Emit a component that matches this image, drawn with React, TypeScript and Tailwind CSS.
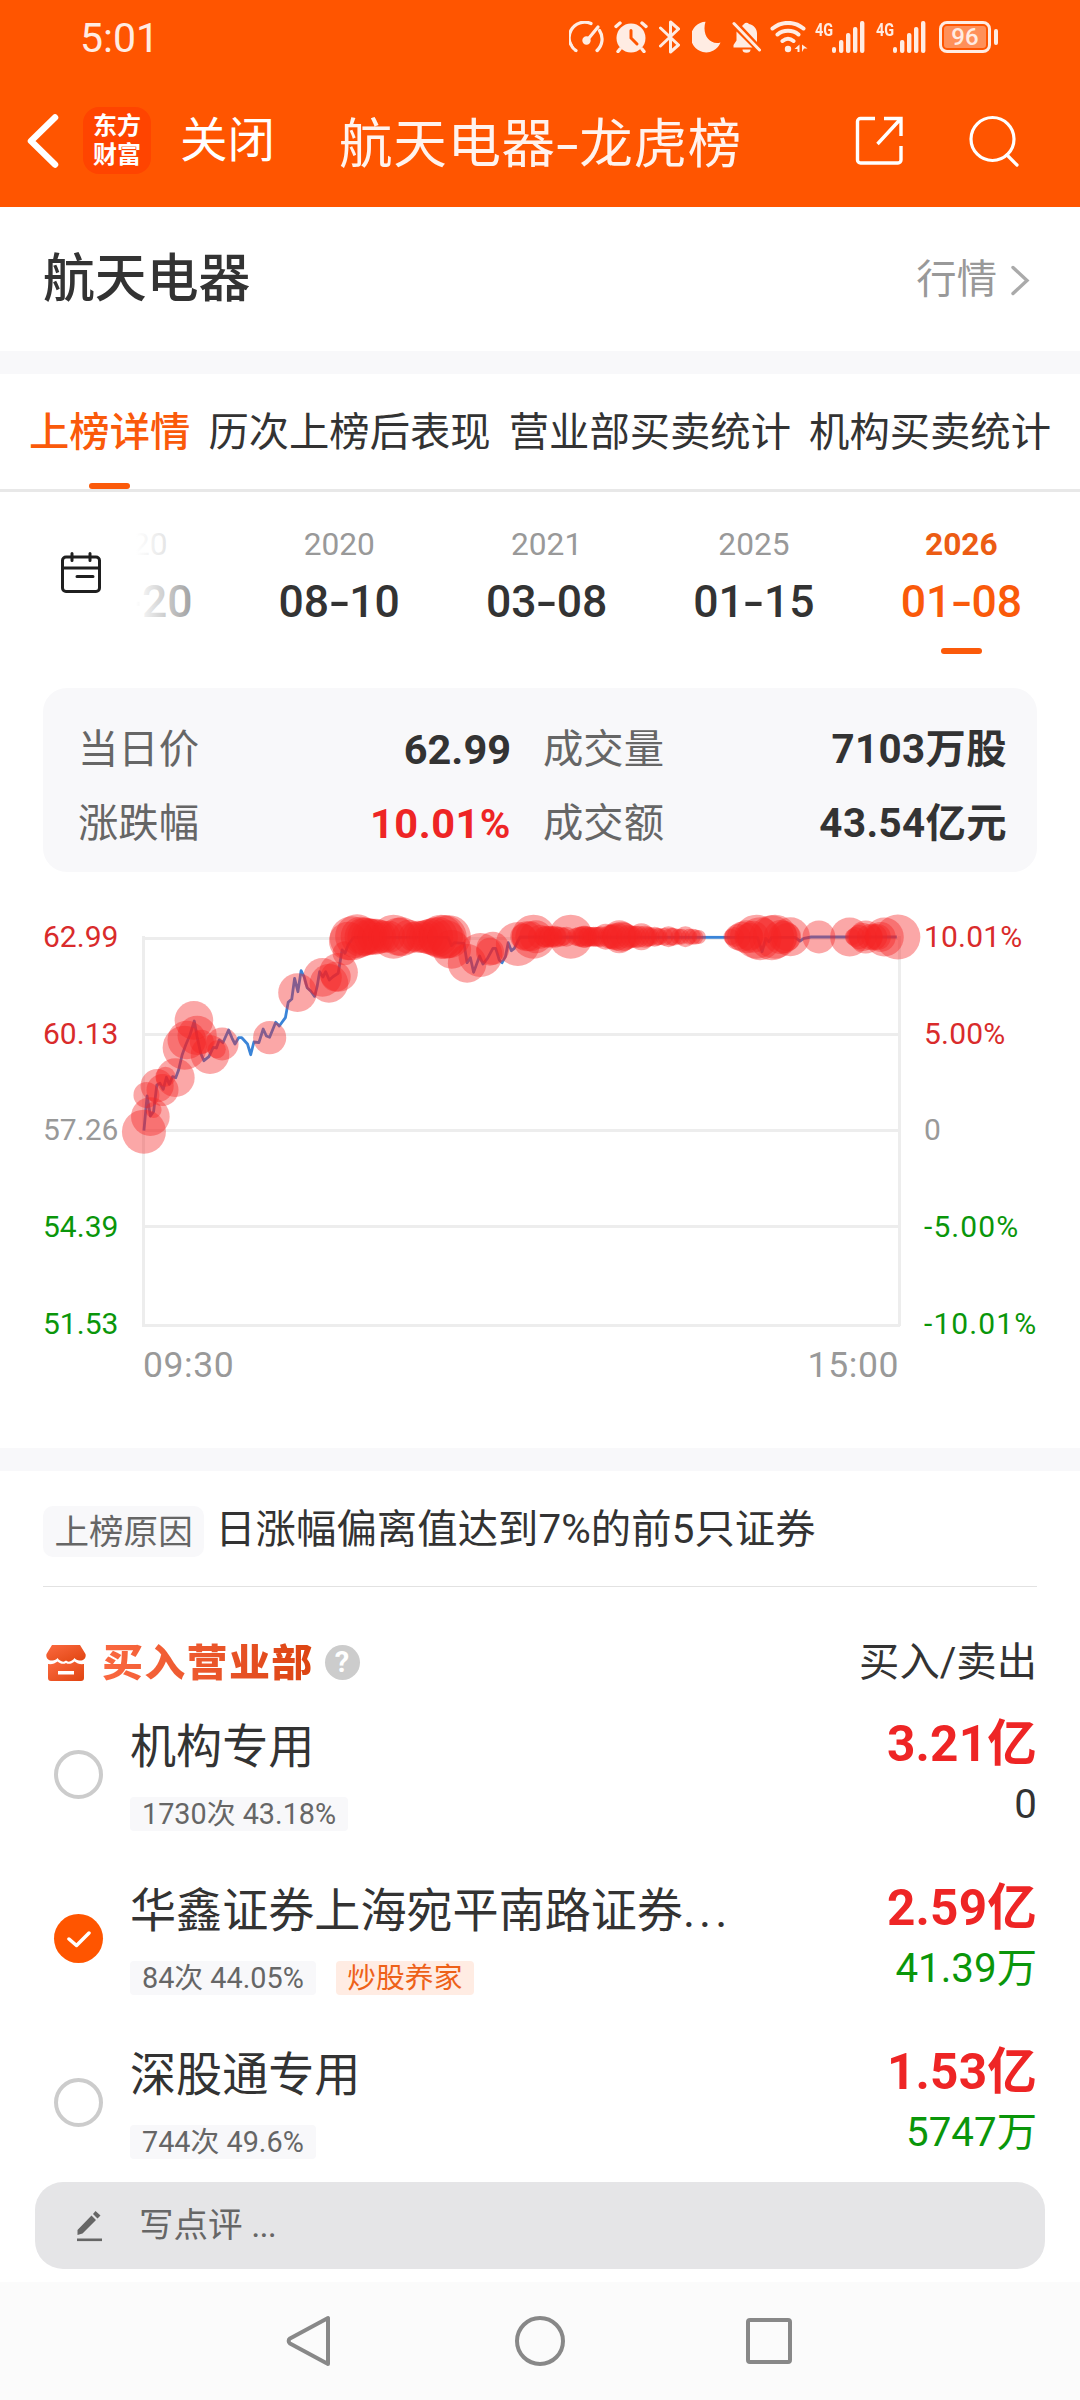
import { useState } from "react";
import clsx from "clsx";

type TradeDate = {
  year: string;
  month: string;
  day: string;
};

type Branch = {
  name: string;
  truncated?: boolean;
  stat: string;
  label?: string;
  buy: string;
  sell: string;
};

const tabs = ["上榜详情", "历次上榜后表现", "营业部买卖统计", "机构买卖统计"];

const tradeDates: TradeDate[] = [
  { year: "2020", month: "05", day: "20" },
  { year: "2020", month: "08", day: "10" },
  { year: "2021", month: "03", day: "08" },
  { year: "2025", month: "01", day: "15" },
  { year: "2026", month: "01", day: "08" },
];

const branches: Branch[] = [
  { name: "机构专用", stat: "1730次 43.18%", buy: "3.21亿", sell: "0" },
  {
    name: "华鑫证券上海宛平南路证券",
    truncated: true,
    stat: "84次 44.05%",
    label: "炒股养家",
    buy: "2.59亿",
    sell: "41.39万",
  },
  { name: "深股通专用", stat: "744次 49.6%", buy: "1.53亿", sell: "5747万" },
];

// Intraday price samples
const pricePoints: [number, number][] = [
  [403, 722], [412, 618], [421, 678], [430, 665], [439, 585], [448, 580], [457, 598], [466, 562],
  [474, 583], [483, 560], [492, 563], [500, 540], [510, 495], [520, 465], [532, 435], [544, 393],
  [552, 440], [562, 490], [571, 512], [585, 500], [597, 472], [606, 474], [614, 450], [624, 458],
  [640, 420], [650, 445], [658, 462], [668, 443], [677, 443], [693, 462], [702, 494], [711, 456],
  [725, 458], [737, 417], [746, 438], [755, 442], [772, 397], [782, 408], [799, 383], [807, 337],
  [817, 327], [825, 265], [834, 305], [843, 242], [852, 262], [860, 293], [870, 303], [881, 319],
  [888, 290], [895, 245], [904, 261], [912, 245], [922, 270], [932, 260], [947, 250], [958, 180],
  [966, 190], [975, 165], [990, 142], [1255, 142], [1264, 167], [1272, 158], [1299, 160], [1308, 218],
  [1317, 203], [1326, 247], [1343, 198], [1352, 222], [1365, 205], [1380, 175], [1388, 175], [1398, 210],
  [1406, 218], [1415, 200], [1423, 158], [1432, 182], [1440, 175], [1456, 141], [2121, 142], [2134, 185],
  [2144, 145], [2153, 155], [2161, 142], [2226, 142], [2240, 153], [2251, 145], [2271, 141], [2511, 141],
];

// Big orders: x, y, radius
const bubbles: [number, number, number][] = [
  [403, 725, 22], [421, 680, 19.3], [410, 615, 13], [440, 587, 16.6], [455, 600, 16], [463, 560, 10],
  [430, 660, 8], [491, 563, 19.3], [517, 473, 22], [543, 391, 19.3], [523, 450, 19.3], [552, 436, 19.6],
  [588, 494, 19.3], [622, 462, 16.4], [607, 478, 9], [565, 455, 12],
  [755, 443, 16.6], [833, 308, 19.3], [903, 262, 19.3], [921, 280, 19.3], [948, 247, 19.3], [940, 260, 15],
  [965, 190, 12], [975, 153, 19.3], [985, 145, 22], [1000, 139, 22], [1010, 140, 20], [1018, 140, 19],
  [1026, 140, 19], [1034, 140, 18], [1042, 140, 18], [1052, 140, 18], [1062, 140, 17], [1076, 140, 16],
  [1090, 140, 16], [1102, 140, 22], [1115, 140, 19], [1125, 140, 19.5], [1145, 140, 17], [1158, 140, 15],
  [1170, 140, 16], [1182, 140, 16], [1194, 140, 17], [1205, 140, 18], [1216, 140, 19], [1226, 140, 20],
  [1235, 140, 22], [1245, 141, 22], [1258, 140, 21.5], [1250, 148, 19], [1265, 178, 19.3], [1308, 220, 19.3],
  [1345, 195, 22], [1380, 175, 16.5], [1372, 185, 14], [1450, 162, 22], [1494, 140, 22],
  [1465, 140, 13], [1475, 139, 15], [1485, 139, 15], [1501, 140, 16.5], [1512, 140, 12], [1524, 140, 10.5],
  [1536, 140, 10.5], [1548, 140, 10], [1560, 140, 10], [1586, 140, 10], [1598, 140, 22],
  [1530, 140, 11], [1542, 140, 11], [1554, 140, 11], [1570, 140, 10], [1578, 140, 9],
  [1612, 140, 9], [1622, 140, 10], [1634, 140, 11], [1644, 140, 10], [1656, 140, 9.5], [1668, 140, 10],
  [1628, 140, 10], [1639, 140, 11], [1650, 140, 10], [1662, 140, 10], [1675, 140, 10],
  [1682, 140, 10.5], [1696, 140, 13], [1708, 140, 12], [1720, 140, 13], [1734, 140, 16.5], [1748, 140, 14],
  [1714, 140, 12], [1727, 140, 14], [1741, 140, 15], [1768, 140, 11],
  [1760, 140, 12], [1778, 140, 11], [1796, 140, 13.5], [1806, 140, 11], [1820, 140, 9.5], [1833, 140, 10],
  [1787, 140, 11], [1813, 140, 10], [1840, 140, 9],
  [1846, 140, 8.5], [1860, 140, 9], [1872, 140, 10.5], [1886, 140, 9], [1900, 140, 8], [1919, 140, 10.5],
  [1879, 140, 9], [1908, 140, 8],
  [1930, 140, 8], [1940, 140, 8], [1948, 141, 7.5], [1957, 141, 7],
  [2048, 141, 8], [2056, 141, 10], [2066, 141, 13], [2078, 140, 15], [2090, 140, 16.5], [2098, 140, 14],
  [2108, 140, 16], [2118, 140, 22], [2128, 146, 21.5], [2161, 143, 22.5], [2170, 140, 22],
  [2186, 141, 17], [2196, 141, 16], [2204, 141, 14], [2213, 140, 19.5], [2293, 141, 16.4], [2379, 141, 19.5],
  [2388, 141, 8], [2396, 141, 10], [2406, 141, 12], [2416, 141, 14], [2424, 141, 16.5], [2436, 141, 13],
  [2448, 141, 13], [2458, 141, 13], [2466, 141, 15], [2476, 141, 19.5], [2514, 141, 22.5],
];

const scaleX = (x: number) => x / 2.8;
const scaleY = (y: number) => y / 3;

const axisRows = [
  { price: "62.99", percent: "10.01%", y: 46, line: 48.5, color: "#d92b2b" },
  { price: "60.13", percent: "5.00%", y: 143, line: 144.5, color: "#d92b2b" },
  { price: "57.26", percent: "0", y: 239, line: 240.5, color: "#999999" },
  { price: "54.39", percent: "-5.00%", y: 336, line: 336.5, color: "#0a960a" },
  { price: "51.53", percent: "-10.01%", y: 433, line: 435.5, color: "#0a960a" },
];

function Signal() {
  return (
    <div className="flex h-8 w-[50px] items-start">
      <span className="-mt-px w-[17px] origin-left scale-x-[0.76] text-[19px] leading-none font-bold">4G</span>
      <svg className="h-8 w-[33px]" viewBox="0 0 33 32" fill="currentColor">
        <rect x="0" y="26" width="4" height="6" rx="2" />
        <rect x="7" y="19" width="4.4" height="13" rx="2" />
        <rect x="14" y="12" width="4.4" height="20" rx="2" />
        <rect x="21" y="6" width="4.4" height="26" rx="2" />
        <rect x="28" y="0" width="4.4" height="32" rx="2" />
      </svg>
    </div>
  );
}

function StatusBar() {
  return (
    <div className="flex h-[74px] items-center pl-[80px] text-[#ffece3]">
      <span className="w-[489px] pt-[2px] text-[41px] leading-none">5:01</span>
      <svg className="h-8 w-[35px]" viewBox="0 0 35 32" fill="none" stroke="currentColor" strokeWidth="3.2" strokeLinecap="round">
        <path d="M7 29.500A15.500 15.500 0 0 1 22 2.500M30.500 9.500A15.500 15.500 0 0 1 28 29.500" />
        <path d="M2 22l4 8M33 22l-4 8" strokeWidth="1.500" />
        <path d="M17.500 20L29 6" />
        <circle cx="17.500" cy="19.500" r="2.600" fill="currentColor" />
      </svg>
      <svg className="ml-[10px] h-8 w-[34px]" viewBox="0 0 34 32" fill="none" stroke="currentColor" strokeWidth="3.400" strokeLinecap="round">
        <circle cx="17" cy="17" r="14.500" fill="currentColor" stroke="none" />
        <path d="M2 5.500L6 2M32 5.500L28 2M6 28l-2 2.500M28 28l2 2.500" />
        <path d="M17 9.500V17l6 6" stroke="#ff5500" strokeWidth="3" />
      </svg>
      <svg className="ml-[11px] h-[34px] w-[21px]" viewBox="0 0 21 34" fill="none" stroke="currentColor" strokeWidth="3" strokeLinejoin="round" strokeLinecap="round">
        <path d="M1.500 8l18 17-8 7V2l8 7-18 17" />
      </svg>
      <svg className="ml-[12px] h-8 w-[29px]" viewBox="0 0 29 32" fill="currentColor">
        <path d="M13.500 0.800A15.300 15.300 0 1 0 28.500 21.500C18 24.500 9.500 14 13.500 0.800z" />
      </svg>
      <svg className="ml-[11px] h-8 w-[29px]" viewBox="0 0 29 32" fill="currentColor">
        <path d="M4.500 10.500L20.500 26.500H1.500V24l3-4.500zM10 5l2-2a3.200 3.200 0 0 1 5 0c5 1 8 5 8 9.500v8.500z" />
        <path d="M10.500 28.500h8a4 3.200 0 0 1-8 0z" />
        <path d="M2 2.500L27.500 29" stroke="currentColor" strokeWidth="3" strokeLinecap="round" />
      </svg>
      <svg className="ml-[9px] h-8 w-[38px]" viewBox="0 0 38 32" fill="none" stroke="currentColor" strokeWidth="4" strokeLinecap="round">
        <path d="M2.500 7.500c9-7.500 22-7.500 31 0M7.500 13.500c6-5 15-5 21 0M12.500 20c3.500-2.800 7.500-2.800 11 0" />
        <circle cx="18" cy="28" r="3.200" fill="currentColor" stroke="none" />
        <path d="M24.500 28l5-4.500V31h-2v-3zM32 31v-7.500l5.500 4h-3.500z" fill="currentColor" stroke="none" />
      </svg>
      <div className="ml-[7px]">
        <Signal />
      </div>
      <div className="ml-[11px]">
        <Signal />
      </div>
      <div className="ml-[13px] flex items-center gap-[3px]">
        <div className="h-8 w-[52px] rounded-lg border-[3px] border-current p-[2px]">
          <div className="flex h-full items-center justify-center rounded-[3px] bg-white/35 text-[24px] leading-none font-medium">
            96
          </div>
        </div>
        <div className="h-4 w-1 rounded-full bg-current" />
      </div>
    </div>
  );
}

function TitleBar() {
  return (
    <div className="flex h-[133px] items-center pl-[27px] text-white">
      <svg className="h-[54px] w-8" viewBox="0 0 32 54" fill="none" stroke="currentColor" strokeWidth="6.500" strokeLinecap="round" strokeLinejoin="round">
        <path d="M28 3.500L4 27l24 23.500" />
      </svg>
      <div className="ml-6 flex h-[67px] w-[68px] flex-col items-center justify-center gap-[5px] rounded-2xl bg-[#ff4400] text-[24px] leading-[24px] font-bold">
        <span>东方</span>
        <span>财富</span>
      </div>
      <span className="ml-[29px] w-[96px] pt-[3px] text-[47.500px] leading-none">关闭</span>
      <span className="ml-[63px] w-[404px] pt-[8px] text-[53.500px] leading-none tracking-[0.7px] whitespace-nowrap text-[#fff3ee]">
        航天电器<span className="mr-[4px] ml-[4px] inline-block scale-x-[1.5]">-</span>龙虎榜
      </span>
      <svg className="ml-[112px] h-[50px] w-[49px]" viewBox="0 0 49 50" fill="none" stroke="currentColor" strokeWidth="3.400">
        <path d="M20 2.500H5.500a3 3 0 0 0-3 3V44a3 3 0 0 0 3 3H43a3 3 0 0 0 3-3V30M29 2.500h17V20M46 2.500L22.500 28" />
      </svg>
      <svg className="ml-[65px] h-[52px] w-[50px]" viewBox="0 0 50 52" fill="none" stroke="currentColor" strokeWidth="3.200" strokeLinecap="round">
        <circle cx="23.500" cy="24" r="21.500" />
        <path d="M38 40l10 10" />
      </svg>
    </div>
  );
}

function DateStrip() {
  const [selected, setSelected] = useState(4);

  return (
    <div className="flex h-[196px] items-start">
      <svg className="mt-[60px] ml-[60px] h-[42px] w-[42px] shrink-0" viewBox="0 0 42 42" fill="none" stroke="#1f1f1f" strokeWidth="3" strokeLinecap="round">
        <rect x="2.500" y="5" width="37" height="34.500" rx="3.500" />
        <path d="M12 1.500v7M30 1.500v7M3 16h36M17 24.500h16" />
      </svg>
      <div className="relative ml-[34px] flex h-full w-[944px] justify-end overflow-hidden pr-[15px]">
        {tradeDates.map((item, idx) => (
          <div
            key={idx}
            className="flex w-[207.36px] shrink-0 flex-col items-center"
            onClick={() => setSelected(idx)}
          >
            <span
              className={clsx(
                "mt-[37px] text-[31.68px] leading-[32px]",
                selected === idx ? "font-bold text-[#ec5c14]" : "text-[#999999]"
              )}
            >
              {item.year}
            </span>
            <span
              className={clsx(
                "mt-[19px] text-[44.500px] leading-[44px] font-medium",
                selected === idx ? "text-[#fa5a0a]" : "text-[#333333]"
              )}
            >
              {item.month}
              <span className="mx-[2.500px] inline-block scale-x-[1.4]">-</span>
              {item.day}
            </span>
            {selected === idx && <div className="mt-[24px] h-[6px] w-[41px] rounded-full bg-[#fb5a0a]" />}
          </div>
        ))}
        <div className="absolute inset-y-0 left-0 w-[120px] bg-linear-to-r from-white to-white/0" />
      </div>
    </div>
  );
}

function SummaryCard() {
  return (
    <div className="mx-[43px] grid h-[184px] grid-cols-[433px_464px] content-center gap-x-8 gap-y-[10px] rounded-3xl bg-[#f8f8fa] pt-[13px] pl-[35px] text-[40.32px] leading-[64px] text-[#666666]">
      <div className="flex justify-between">
        <span>当日价</span>
        <span className="text-[41.500px] font-bold text-[#333333]">62.99</span>
      </div>
      <div className="flex justify-between">
        <span>成交量</span>
        <span className="font-bold tracking-[0.4px] text-[#333333]">7103万股</span>
      </div>
      <div className="flex justify-between">
        <span>涨跌幅</span>
        <span className="text-[41.500px] font-bold tracking-[0.5px] text-[#ee2525]">10.01%</span>
      </div>
      <div className="flex justify-between">
        <span>成交额</span>
        <span className="font-bold tracking-[0.4px] text-[#333333]">43.54亿元</span>
      </div>
    </div>
  );
}

function PriceChart() {
  const path = pricePoints.map(([x, y], i) => `${i ? "L" : "M"}${scaleX(x).toFixed(1)} ${scaleY(y).toFixed(1)}`).join("");

  return (
    <svg className="mt-[18px] block h-[558px] w-[1080px]" viewBox="0 0 1080 558">
      <g stroke="#ededed" strokeWidth="3">
        {axisRows.map((row) => (
          <line key={row.price} x1="142" x2="900" y1={row.line} y2={row.line} />
        ))}
        <line x1="143.500" x2="143.500" y1="46" y2="437" />
        <line x1="899.500" x2="899.500" y1="46" y2="436" />
      </g>
      <path d={path} fill="none" stroke="#3a84d8" strokeWidth="2.800" strokeLinejoin="round" />
      <g fill="#f52222" fillOpacity="0.400">
        {bubbles.map(([x, y, r], i) => (
          <circle key={i} cx={scaleX(x)} cy={scaleY(y)} r={r} />
        ))}
      </g>
      <g fontSize="30">
        {axisRows.map((row) => (
          <g key={row.price} fill={row.color}>
            <text x="43" y={row.y + 10.5}>{row.price}</text>
            <text x="924" y={row.y + 10.5} letterSpacing={row.percent.startsWith("-") ? 1.1 : 0.2}>
              {row.percent}
            </text>
          </g>
        ))}
      </g>
      <g fontSize="35.500" fill="#999999" letterSpacing="0.600">
        <text x="143" y="487">09:30</text>
        <text x="899" y="487" textAnchor="end">15:00</text>
      </g>
    </svg>
  );
}

function BranchRow({ item, checked, onToggle }: { item: Branch; checked: boolean; onToggle: () => void }) {
  return (
    <div className="flex h-[164.16px] px-[43px]">
      <div className="w-[87px] shrink-0 pt-[29px] pl-[11px]" onClick={onToggle}>
        {checked ? (
          <div className="flex h-[49px] w-[49px] items-center justify-center rounded-full bg-[#ff5500]">
            <svg className="h-5 w-6" viewBox="0 0 24 20" fill="none" stroke="white" strokeWidth="3.500" strokeLinecap="round" strokeLinejoin="round">
              <path d="M2 10l7.500 6.500L22 4" />
            </svg>
          </div>
        ) : (
          <div className="h-[49px] w-[49px] rounded-full border-[4px] border-[#cccccc]" />
        )}
      </div>
      <div className="flex-1">
        <div className="mt-[1px] flex h-[50px] items-center text-[46.08px] leading-none whitespace-nowrap text-[#333333]">
          {item.name}
          {item.truncated && <span className="tracking-[4px]">...</span>}
        </div>
        <div className="mt-[25px] flex gap-5 text-[28.8px] leading-[34px]">
          <span className="rounded-sm bg-[#f8f8fa] px-[12px] text-[#666666]">{item.stat}</span>
          {item.label && <span className="rounded-sm bg-[#ffece3] px-[11.500px] text-[#ee6119]">{item.label}</span>}
        </div>
      </div>
      <div className="flex flex-col items-end">
        <span className="text-[49.500px] leading-[46px] font-bold tracking-[0.2px] text-[#ee2525]">{item.buy}</span>
        <span className={clsx("mt-[15px] text-[40.32px] leading-[46px]", item.sell === "0" ? "text-[#333333]" : "text-[#0a960a]")}>
          {item.sell}
        </span>
      </div>
    </div>
  );
}

export default function App() {
  const [activeTab, setActiveTab] = useState(0);
  const [checkedRow, setCheckedRow] = useState(1);

  return (
    <div className="flex h-[2400px] w-[1080px] flex-col overflow-hidden bg-white font-['Roboto','Noto_Sans_CJK_SC',sans-serif]">
      <header className="h-[207px] shrink-0 bg-[#ff5500]">
        <StatusBar />
        <TitleBar />
      </header>

      {/* Stock name */}
      <div className="flex h-[144px] shrink-0 items-center justify-between pt-[2px] pr-[50px] pl-[43px]">
        <h1 className="text-[51.84px] leading-none font-medium text-[#333333]">航天电器</h1>
        <div className="flex items-center gap-[13px] text-[40.32px] leading-none text-[#999999]">
          行情
          <svg className="h-[31px] w-5" viewBox="0 0 20 31" fill="none" stroke="#aaaaaa" strokeWidth="3.400" strokeLinecap="round">
            <path d="M3 2.500l14 13-14 13" />
          </svg>
        </div>
      </div>
      <div className="h-[23px] shrink-0 bg-[#f8f8fa]" />

      {/* Tabs */}
      <div className="flex h-[118px] shrink-0 justify-between border-b-[3px] border-[#e8e8e8] pr-[29px] pl-[29px]">
        {tabs.map((tab, idx) => (
          <div key={tab} className="flex flex-col items-center" onClick={() => setActiveTab(idx)}>
            <span
              className={clsx(
                "h-[109px] text-[40.32px] leading-[118px] whitespace-nowrap",
                activeTab === idx ? "font-medium text-[#fa5a0a]" : "text-[#333333]"
              )}
            >
              {tab}
            </span>
            {activeTab === idx && <div className="h-[6px] w-[41px] shrink-0 rounded-full bg-[#fb5a0a]" />}
          </div>
        ))}
      </div>

      <DateStrip />
      <SummaryCard />
      <PriceChart />
      <div className="h-[23px] shrink-0 bg-[#f8f8fa]" />

      {/* Reason */}
      <div className="mx-[43px] flex h-[116px] shrink-0 items-center border-b border-[#e2e2e2]">
        <span className="mt-[6px] h-[51px] rounded-[10px] bg-[#f8f8fa] px-[11.500px] text-[34.560px] leading-[52px] text-[#666666]">
          上榜原因
        </span>
        <span className="ml-[11px] pt-[3px] text-[40.32px] leading-none tracking-[0.1px] text-[#333333]">日涨幅偏离值达到7%的前5只证券</span>
      </div>

      {/* Buying branches */}
      <div className="flex h-[132px] shrink-0 items-center pt-[19px] pr-[43px] pl-[46px]">
        <svg className="h-9 w-10" viewBox="0 0 40 36">
          <defs>
            <linearGradient id="shop" x1="0" y1="0" x2="1" y2="1">
              <stop offset="0" stopColor="#fb6a40" />
              <stop offset="1" stopColor="#e04410" />
            </linearGradient>
          </defs>
          <path d="M6 0h28l5.500 9c1 4-2 7-6 6.500-2 0-4-1-5-2.500-2 3-6 5-8.500 2.500-2.500 2.500-6.500.5-8.500-2.500-1 1.500-3 2.500-5 2.500C2.500 16-.5 13 .5 9z" fill="url(#shop)" />
          <path fillRule="evenodd" d="M2 19c4 .5 7-.5 9.500-2.500 3 2.500 6 3 8.500 1.500 2.500 1.500 5.500 1 8.500-1.500 2.500 2 5.500 3 9.500 2.500v14a3 3 0 0 1-3 3H5a3 3 0 0 1-3-3zM12 26v3.500h16V26z" fill="url(#shop)" />
        </svg>
        <span className="ml-[16px] scale-y-[0.92] bg-linear-to-r from-[#fa6840] to-[#dc4410] bg-clip-text text-[41px] leading-[48px] font-black tracking-[1.300px] text-transparent">
          买入营业部
        </span>
        <div className="ml-[11px] flex h-[35px] w-[35px] items-center justify-center rounded-full bg-[#cccccc] text-[29px] leading-none font-bold text-white">
          ?
        </div>
        <span className="ml-auto pt-[2px] text-[40.32px] leading-none text-[#333333]">买入/卖出</span>
      </div>
      <div className="h-[463px] shrink-0 pt-[2px]">
        {branches.map((item, idx) => (
          <BranchRow key={item.name} item={item} checked={checkedRow === idx} onToggle={() => setCheckedRow(idx)} />
        ))}
      </div>

      {/* Comment entry */}
      <div className="mx-[35px] flex h-[87px] shrink-0 items-center rounded-[28px] bg-[#e5e5e7] pl-[41px] text-[34.560px] leading-none text-[#666666]">
        <svg className="h-8 w-7" viewBox="0 0 28 32" fill="currentColor">
          <path d="M1.500 25V20L15.500 5.500l4.500 4.500L6.500 23.500zM17 4l2.500-3 5 4.500-3 3z" />
          <rect x="1" y="28.500" width="25" height="2.600" />
        </svg>
        <span className="ml-[35px]">
          写点评 <span className="tracking-[-0.8px]">...</span>
        </span>
      </div>

      {/* System navigation */}
      <div className="mt-[13px] flex flex-1 items-center bg-[#fbfbfb] pl-[286px] text-[#888888]">
        <svg className="h-[52px] w-[46px]" viewBox="0 0 46 52" fill="none" stroke="currentColor" strokeWidth="4" strokeLinejoin="round">
          <path d="M42 3v46L4 28.500a3 3 0 0 1 0-5z" />
        </svg>
        <div className="ml-[183px] h-[50px] w-[50px] rounded-full border-[4px] border-current" />
        <div className="ml-[181px] h-[46px] w-[46px] rounded-[4px] border-[4px] border-current" />
      </div>
    </div>
  );
}
